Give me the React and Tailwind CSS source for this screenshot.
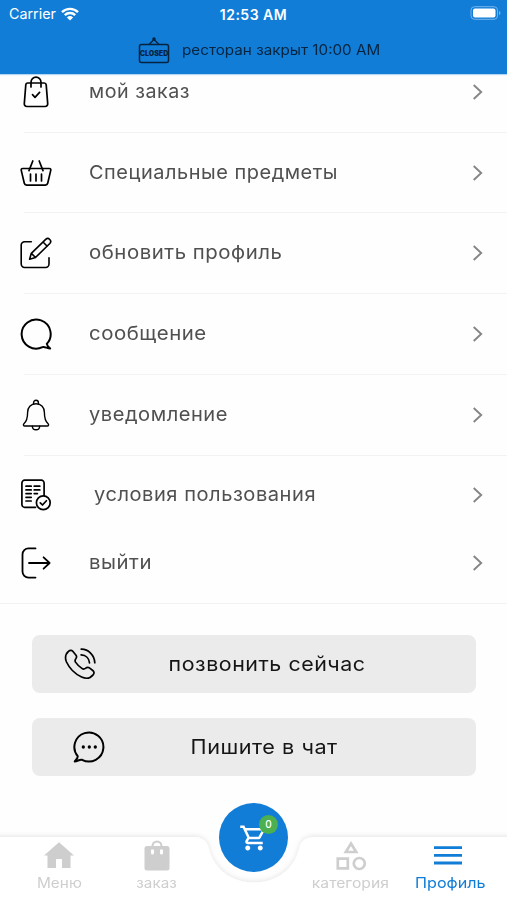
import clsx from 'clsx';

const iconProps = {
  width: 32,
  height: 32,
  viewBox: '0 0 32 32',
  fill: 'none',
  stroke: 'currentColor',
  strokeWidth: 1.7,
  strokeLinecap: 'round',
  strokeLinejoin: 'round',
};

const OrderIcon = () => (
  <svg {...iconProps}>
    <path d="M7.8 7h16.4a2 2 0 0 1 2 1.8l1.5 18.8a2.6 2.6 0 0 1-2.6 2.9H6.9a2.6 2.6 0 0 1-2.6-2.9L5.8 8.8a2 2 0 0 1 2-1.8z" />
    <path d="M11 11V6.200a5 5 0 0 1 10 0V11M12.5 18.7l2.5 2.600 4.600-4.900" />
  </svg>
);

const BasketIcon = () => (
  <svg {...iconProps}>
    <path d="M2.5 11.500h27a1.300 1.300 0 0 1 1.300 1.600l-3.100 13.200a2.400 2.400 0 0 1-2.300 1.800H6.600a2.400 2.400 0 0 1-2.300-1.800L1.200 13.100a1.300 1.300 0 0 1 1.300-1.600z" />
    <path d="M12.800 4L9 13.600M19.200 4L23 13.600M10.500 17v7M16 17v7M21.500 17v7" />
  </svg>
);

const EditIcon = () => (
  <svg {...iconProps} strokeWidth="1.6">
    <path d="M11.300 4.700H4.600A3.400 3.400 0 0 0 1.200 8.100v19a3.400 3.400 0 0 0 3.400 3.400h21a3.400 3.400 0 0 0 3.400-3.400v-6.400" />
    <path d="M9.600 22.300l1.700-6L25.700 2.400a2.900 2.900 0 0 1 4.100 4.100L15.500 20.500zM11.300 16.300l4.200 4.200M23 5l4.200 4.200" />
  </svg>
);

const MessageIcon = () => (
  <svg {...iconProps} strokeWidth="2">
    <path d="M26.800 25.900A14.500 14.500 0 1 0 22.500 29.100C24.700 28.300 27 30.400 30.200 30.500C28.300 29 27.200 28 26.800 25.900z" />
  </svg>
);

const BellIcon = () => (
  <svg {...iconProps} strokeWidth="1.4">
    <path d="M16 4.800c-5.300 0-8.400 3.700-8.400 8.700 0 6.300-.8 8.800-3.700 11.300-.9.900-.4 2.200.8 2.200h22.600c1.200 0 1.700-1.300.8-2.200-2.900-2.500-3.700-5-3.700-11.300 0-5-3.100-8.700-8.400-8.700z" />
    <path d="M13.600 4.900V3.700a2.400 2.400 0 0 1 4.800 0v1.200M12.300 27.200c.3 4.700 7.100 4.700 7.400 0" />
  </svg>
);

const TermsIcon = () => (
  <svg {...iconProps}>
    <path d="M15.500 28.300H4.700a2.800 2.800 0 0 1-2.800-2.800V4a2.800 2.800 0 0 1 2.800-2.800h16.600A2.800 2.800 0 0 1 24.100 4v12.500" />
    <path d="M6 7.200h5.200M14.200 7.200h5.600M6 10.900h5.200M14.200 10.900h5.600M6 14.600h5.200M14.200 14.600h3.200M6 18.300h5.200M6 22h5.200" />
    <circle cx="23.300" cy="23.700" r="6.900" />
    <path d="M20.300 23.900l2.200 2.100 3.900-4.300" />
  </svg>
);

const LogoutIcon = () => (
  <svg {...iconProps} strokeWidth="1.8">
    <path d="M15.500 1.400H8.500a6 6 0 0 0-6 6v17.200a6 6 0 0 0 6 6h7M9 16h20.600M23.600 10.300l6 5.700-6 5.700" />
  </svg>
);

const PhoneIcon = () => (
  <svg {...iconProps}>
    <path d="M4.700 3.200c1.600-1.500 3.300-1 4.500.5l2.800 3.600c.9 1.200.7 2.300-.2 3.500-1.200 1.500-1 2.300-.1 3.600 1.700 2.600 3.900 4.600 6.500 6.200 1.200.7 2 .7 3.200-.2 1.500-1.200 2.700-1.500 4-.5l3.400 2.600c1.500 1.200 1.600 2.900.3 4.400-3 3.700-6.500 4.400-11.500 2.100C10.500 25.700 5.600 20.600 2.500 14c-2-4.700-1.500-7.500 2.200-10.800z" />
    <path d="M17.200 1.200c7.100-.2 13.300 6 13.600 13.600M17.100 6.900c4.800.3 8.100 3.500 8.400 8" />
  </svg>
);

const ChatIcon = () => (
  <svg {...iconProps} strokeWidth="2">
    <path d="M4.700 25.200A14.500 14.500 0 1 1 9.100 28.800C6.500 28.100 4.700 30.300 1.700 30.500C2.700 28.800 4.900 27.500 4.700 25.200z" />
    <path strokeWidth="3.300" d="M10.300 16h.01M16.300 16h.01M22.300 16h.01" />
  </svg>
);

const Chevron = () => (
  <svg width="12" height="18" viewBox="0 0 12 18" fill="none" stroke="#858585" strokeWidth="1.9">
    <path d="M1.700 2l7.500 7-7.500 7" />
  </svg>
);

const menuItems = [
  { label: 'мой заказ', icon: OrderIcon, row: 'h-[81px] pb-0.5', text: 'scale-x-[1.035]' },
  { label: 'Специальные предметы', icon: BasketIcon, row: 'h-20 pb-px', text: 'scale-x-[1.05]' },
  { label: 'обновить профиль', icon: EditIcon, row: 'h-[81px] pb-0.5', text: 'scale-x-[1.072]' },
  { label: 'сообщение', icon: MessageIcon, row: 'h-[81px] pb-0.5', text: 'scale-x-[1.073]' },
  { label: 'уведомление', icon: BellIcon, row: 'h-[81px] pb-0.5', text: 'scale-x-[1.057]' },
  { label: 'условия пользования', icon: TermsIcon, row: 'h-[78px]', text: 'ml-[5px] scale-x-[1.057]', noLine: true },
  { label: 'выйти', icon: LogoutIcon, row: 'h-[70px] pb-3', text: 'scale-x-[1.07]', fullLine: true },
];

const StatusBar = () => (
  <div className="grid h-7 grid-cols-3 items-center pl-[9px] pr-1.5 text-[14.5px] text-white">
    <div className="flex items-center gap-[5px]">
      <span className="text-[14.3px]">Carrier</span>
      <svg width="18" height="14" viewBox="0 0 18 14" fill="none" stroke="white" strokeWidth="2.4">
        <path d="M1 5.100a11.500 11.500 0 0 1 16 0M3.800 8.100a7.500 7.500 0 0 1 10.400 0" />
        <path d="M9 13.500L5.900 10.400a4.500 4.500 0 0 1 6.200 0z" fill="white" stroke="none" />
      </svg>
    </div>
    <span className="-ml-[3px] text-center text-[14px] font-semibold tracking-[0.5px] whitespace-nowrap">12:53 AM</span>
    <svg className="-mt-0.5 justify-self-end" width="31" height="14" viewBox="0 0 31 14">
      <rect x="1" y=".7" width="26.500" height="12.600" rx="3.500" fill="none" stroke="#77b3ea" strokeWidth="1" />
      <rect x="3" y="2.500" width="22.500" height="9" rx="2" fill="white" />
      <path d="M29 5v4q1.500-.7 1.500-2T29 5z" fill="#77b3ea" />
    </svg>
  </div>
);

const Header = () => (
  <header className="relative z-10 h-[74px] shrink-0 bg-[#117dd7] shadow-[0_1px_1px_rgba(17,125,215,0.3)]">
    <StatusBar />
    <div className="flex h-[46px] items-center pb-[3px] pl-[138px] text-[#062440]">
      <div className="relative h-7 w-8">
        <svg width="32" height="28" viewBox="0 0 32 28" fill="none" stroke="currentColor" strokeWidth="1.5">
          <rect x="1.500" y="8.500" width="29" height="18" rx="2" />
          <path d="M11 8.500l5-5 5 5" />
          <circle cx="16" cy="3" r="1" fill="currentColor" />
        </svg>
        <span className="absolute inset-x-0 top-[12px] text-center text-[7px] leading-3 font-black">CLOSED</span>
      </div>
      <span className="ml-3 origin-left scale-x-[1.087] text-[14px] whitespace-nowrap">ресторан закрыт 10:00 AM</span>
    </div>
  </header>
);

const MenuRow = ({ item }) => {
  const Icon = item.icon;
  return (
    <li className={clsx('relative flex items-center pl-5 pr-[23px] text-black', item.row)}>
      <Icon />
      <div className="ml-[37px] flex flex-1 text-[19px] leading-6 tracking-[0.5px] whitespace-nowrap text-[#505050]">
        <span className={clsx('origin-left', item.text)}>{item.label}</span>
      </div>
      <Chevron />
      {!item.noLine && (
        <div className={clsx('absolute right-0 bottom-0 h-px bg-[#f3f3f3]', item.fullLine ? 'left-0' : 'left-6')} />
      )}
    </li>
  );
};

const TabBar = () => (
  <nav className="relative h-[100px] shrink-0">
    <svg className="absolute inset-0" width="507" height="100" viewBox="0 0 507 100">
      <defs>
        <filter id="barShadow" x="-5%" y="-20%" width="110%" height="140%">
          <feDropShadow dx="0" dy="-1" stdDeviation="2.5" floodColor="#000" floodOpacity=".1" />
        </filter>
      </defs>
      <path
        d="M-10 37H193C203 37 207 41 209 49C214 70 232 82.500 254 82.500C276 82.500 294 70 299 49C301 41 305 37 315 37H517V110H-10z"
        fill="white"
        filter="url(#barShadow)"
      />
    </svg>
    <div className="absolute top-[3px] left-[219px] flex size-[69px] items-center justify-center rounded-full bg-[#117dd7]">
      <svg width="30" height="30" viewBox="0 0 24 24" fill="white">
        <path d="M15.550 13c.75 0 1.410-.41 1.750-1.030l3.580-6.490A.996.996 0 0 0 20.010 4H5.210l-.94-2H1v2h2l3.600 7.590-1.350 2.440C4.520 15.370 5.480 17 7 17h12v-2H7l1.100-2h7.450zM6.160 6h12.150l-2.760 5H8.530L6.160 6zM7 18c-1.100 0-1.990.9-1.990 2S5.900 22 7 22s2-.9 2-2-.9-2-2-2zm10 0c-1.100 0-1.990.9-1.990 2s.89 2 1.990 2 2-.9 2-2-.9-2-2-2z" />
      </svg>
      <span className="absolute top-3 left-10 flex size-[19px] items-center justify-center rounded-full bg-[#4caf50] text-[10px] font-medium text-white">
        0
      </span>
    </div>
    <div className="relative grid h-full grid-cols-[108px_97px_97px_97px_108px] pt-[39px] text-[14px] leading-5 text-[#cecece]">
      <div className="flex flex-col items-center gap-[2px] pl-[10px]">
        <svg width="32" height="32" viewBox="0 0 32 32" fill="currentColor">
          <path d="M13 29V20h6v9h8.500V16.500H31L16 3.300 1 16.500h3.500V29z" />
        </svg>
        <span className="scale-x-[1.1]">Меню</span>
      </div>
      <div className="flex flex-col items-center gap-[2px]">
        <svg width="32" height="32" viewBox="0 0 32 32" fill="currentColor">
          <path fillRule="evenodd" d="M26 7h-4.500a5.500 5.500 0 0 0-11 0H6a2.500 2.500 0 0 0-2.500 2.500V29A2.500 2.500 0 0 0 6 31.500h20a2.500 2.500 0 0 0 2.500-2.500V9.500A2.500 2.500 0 0 0 26 7zM16 3.500A3.400 3.400 0 0 1 19.400 7h-6.800A3.400 3.400 0 0 1 16 3.500zM10 10.500h3v3.500a1.500 1.500 0 0 1-3 0zM19 10.500h3v3.500a1.500 1.500 0 0 1-3 0z" />
        </svg>
        <span className="scale-x-[1.09]">заказ</span>
      </div>
      <div />
      <div className="flex flex-col items-center gap-[2px]">
        <svg width="32" height="32" viewBox="0 0 32 32" fill="none" stroke="currentColor" strokeWidth="2.7">
          <path d="M16 4.500L21.200 13H10.800zM2.800 19.700h10v9.600h-10z" />
          <circle cx="24.300" cy="24.500" r="5.500" />
        </svg>
        <span className="scale-x-[1.12] whitespace-nowrap">категория</span>
      </div>
      <div className="flex flex-col items-center gap-[2px] pr-2.5 text-[#117dd7]">
        <svg width="28" height="32" viewBox="0 0 28 32" fill="none" stroke="currentColor" strokeWidth="2.8">
          <path d="M0 8.700h28M0 16.300h28M0 24h28" />
        </svg>
        <span className="scale-x-[1.1] pl-1 text-[14.7px]">Профиль</span>
      </div>
    </div>
  </nav>
);

export default function App() {
  return (
    <div className="flex h-[900px] w-[507px] flex-col overflow-hidden bg-[#fefefe] font-['Inter','Noto_Sans',sans-serif]">
      <Header />
      <main className="-mt-[22px] flex-1">
        <ul>
          {menuItems.map((item) => (
            <MenuRow key={item.label} item={item} />
          ))}
        </ul>

        {/* Contact buttons */}
        <div className="flex flex-col gap-[25px] pt-[31px] pr-[31px] pl-8 text-[20px] text-[#151515]">
          <button className="relative flex h-[58px] items-center justify-center rounded-lg bg-[#ebebeb] pl-[26px]">
            <span className="absolute left-8 text-black">
              <PhoneIcon />
            </span>
            <span className="scale-x-[1.07] tracking-[0.5px]">позвонить сейчас</span>
          </button>
          <button className="relative flex h-[58px] items-center justify-center rounded-lg bg-[#ebebeb] pl-[21px]">
            <span className="absolute left-[41px] text-black">
              <ChatIcon />
            </span>
            <span className="scale-x-[1.08] tracking-[0.5px]">Пишите в чат</span>
          </button>
        </div>
      </main>
      <TabBar />
    </div>
  );
}
